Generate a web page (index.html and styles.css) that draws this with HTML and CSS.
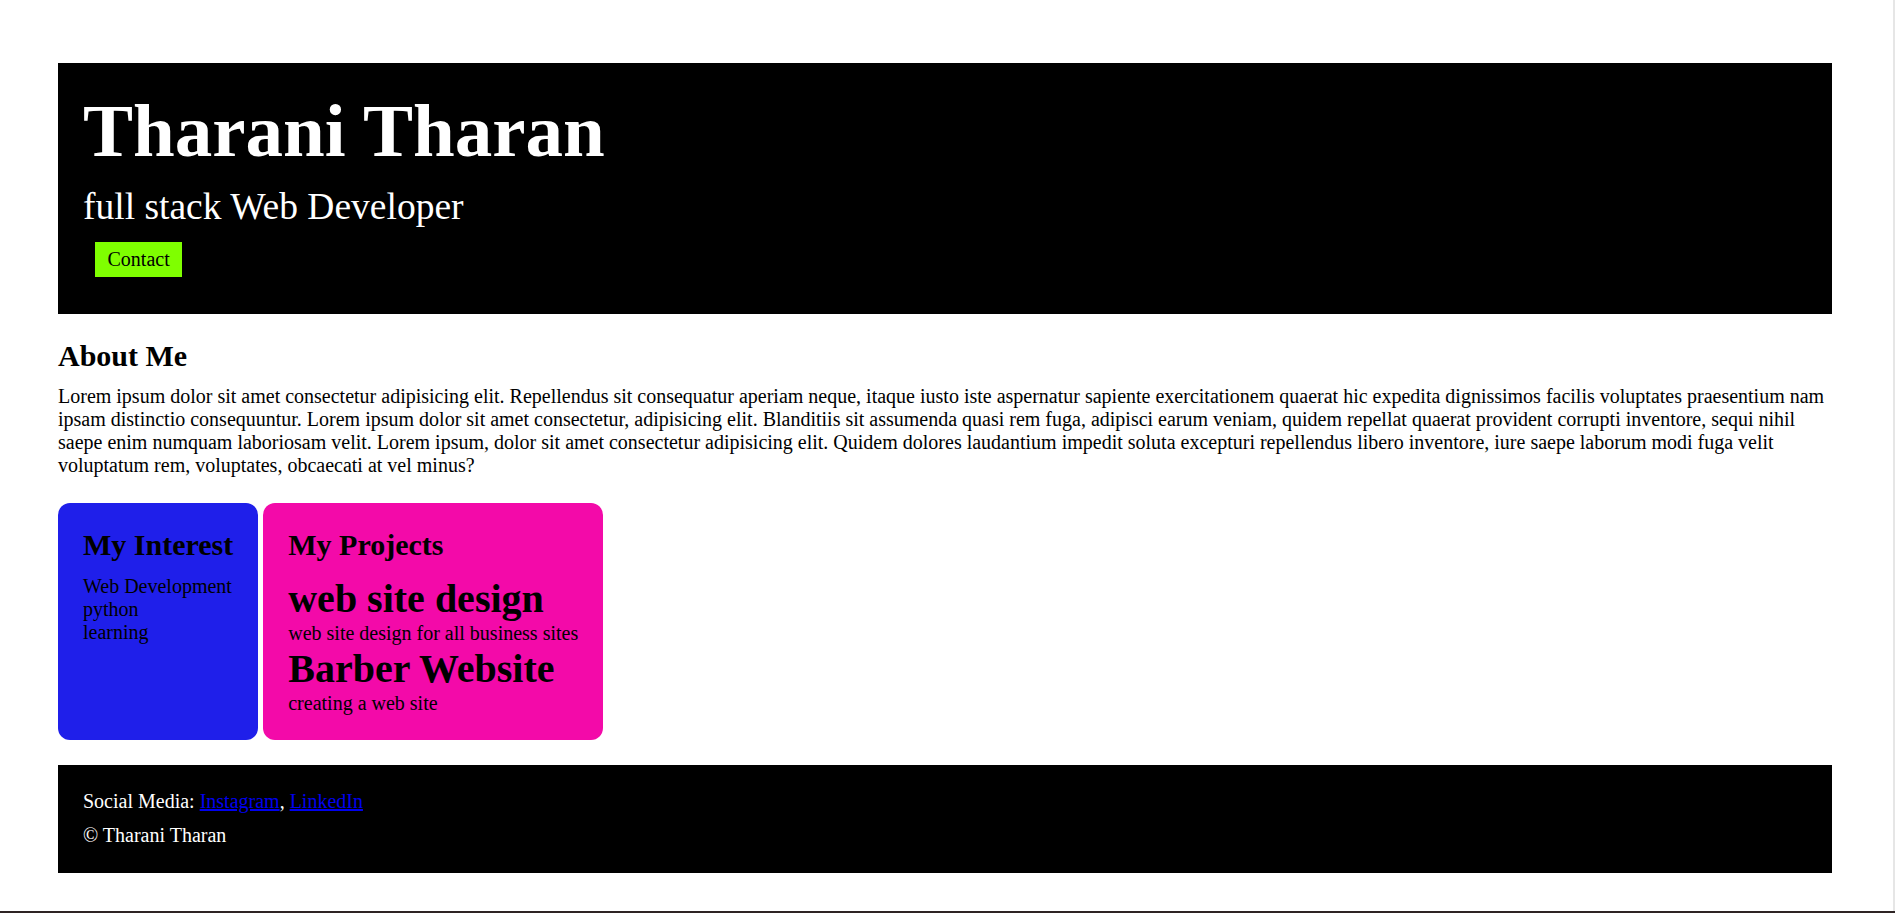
FILE: index.html
```html
<!DOCTYPE html>
<html lang="en">
<head>
<meta charset="utf-8">
<title>Tharani Tharan</title>
<link rel="stylesheet" href="styles.css">
</head>
<body>
<div class="page">
  <header class="hero">
    <h1 class="hero-name">Tharani Tharan</h1>
    <p class="hero-role">full stack Web Developer</p>
    <div class="hero-actions"><a class="contact-btn" href="#contact">Contact</a></div>
  </header>

  <section class="about">
    <h2 class="section-title">About Me</h2>
    <p class="about-text">Lorem ipsum dolor sit amet consectetur adipisicing elit. Repellendus sit consequatur aperiam neque, itaque iusto iste aspernatur sapiente exercitationem quaerat hic expedita dignissimos facilis voluptates praesentium nam ipsam distinctio consequuntur. Lorem ipsum dolor sit amet consectetur, adipisicing elit. Blanditiis sit assumenda quasi rem fuga, adipisci earum veniam, quidem repellat quaerat provident corrupti inventore, sequi nihil saepe enim numquam laboriosam velit. Lorem ipsum, dolor sit amet consectetur adipisicing elit. Quidem dolores laudantium impedit soluta excepturi repellendus libero inventore, iure saepe laborum modi fuga velit voluptatum rem, voluptates, obcaecati at vel minus?</p>
  </section>

  <section class="cards">
    <div class="card card-interest">
      <h2 class="card-title">My Interest</h2>
      <ul class="interest-list">
        <li>Web Development</li>
        <li>python</li>
        <li>learning</li>
      </ul>
    </div>
    <div class="card card-projects">
      <h2 class="card-title">My Projects</h2>
      <h3 class="project-name">web site design</h3>
      <p class="project-desc">web site design for all business sites</p>
      <h3 class="project-name">Barber Website</h3>
      <p class="project-desc">creating a web site</p>
    </div>
  </section>

  <footer class="site-footer" id="contact">
    <p class="footer-line">Social Media: <a class="footer-link" href="#">Instagram</a>, <a class="footer-link" href="#">LinkedIn</a></p>
    <p class="footer-line">&copy; Tharani Tharan</p>
  </footer>
</div>
<div class="frame-bottom"></div>
<div class="frame-right"></div>
</body>
</html>
```

FILE: styles.css
```css
html, body {
  margin: 0;
  padding: 0;
  background: #ffffff;
}

body {
  font-family: "Liberation Serif", "Times New Roman", serif;
  font-size: 20px;
  line-height: normal;
  color: #000000;
}

.page {
  margin: 63px 63px 0 58px;
}

/* Header */
.hero {
  background: #000000;
  color: #ffffff;
  padding: 25px;
}

.hero-name {
  margin: 0 0 11px;
  font-size: 75px;
  font-weight: bold;
  line-height: normal;
}

.hero-role {
  margin: 0 0 14px;
  font-size: 37.5px;
  font-weight: normal;
  line-height: normal;
}

.hero-actions {
  margin: 0 0 12px;
  height: 35px;
}

.contact-btn {
  display: inline-block;
  margin-left: 12px;
  padding: 6px 12.5px;
  line-height: 23px;
  font-size: 20px;
  background: #7fff00;
  color: #000000;
  text-decoration: none;
}

/* About */
.about {
  margin-top: 25px;
}

.section-title {
  margin: 0 0 12px;
  font-size: 30px;
  font-weight: bold;
  line-height: normal;
}

.about-text {
  margin: 0;
  font-size: 20px;
  line-height: 23px;
}

/* Cards */
.cards {
  margin-top: 26px;
  display: flex;
  align-items: stretch;
  gap: 5px;
}

.card {
  flex: none;
  padding: 25px 25px 25px;
  border-radius: 12px;
}

.card-interest {
  background: #1f1fea;
}

.card-projects {
  background: #f30aa9;
}

.card-title {
  margin: 0 0 13px;
  font-size: 30px;
  font-weight: bold;
  line-height: normal;
}

.interest-list {
  list-style: none;
  margin: 0;
  padding: 0;
  line-height: 23px;
}

.project-name {
  margin: 0;
  font-size: 40px;
  font-weight: bold;
  line-height: normal;
}

.project-desc {
  margin: 0;
  font-size: 20px;
  line-height: 23px;
}

/* Footer */
.site-footer {
  margin-top: 25px;
  background: #000000;
  color: #ffffff;
  padding: 25px 25px 26px;
}

.footer-line {
  margin: 0;
  line-height: 23px;
}

.footer-line + .footer-line {
  margin-top: 11px;
}

.footer-link {
  color: #0000ee;
  text-decoration: underline;
}

/* Window frame edges captured in the screenshot */
.frame-bottom {
  position: fixed;
  left: 0;
  right: 0;
  bottom: 0;
  height: 2px;
  background: #2e2424;
}

.frame-right {
  position: fixed;
  top: 0;
  right: 0;
  bottom: 2px;
  width: 2px;
  background: #e6e6e6;
}
```
